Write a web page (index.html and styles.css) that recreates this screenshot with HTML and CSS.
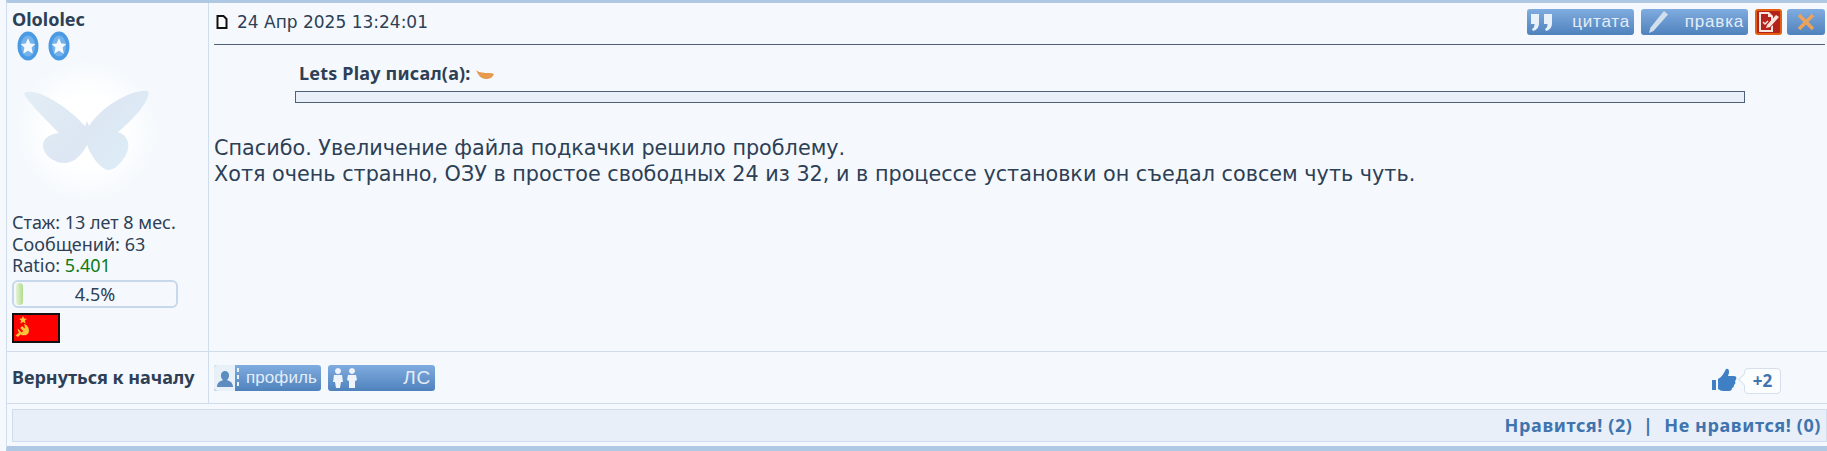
FILE: index.html
```html
<!DOCTYPE html>
<html lang="en">

<head>
    <title>Сообщение</title>
    <link rel="stylesheet" href="styles.css">
</head>

<body>
    <div class="post">
        <!-- left column -->
        <div class="userCell">
            <div class="userName">Olololec</div>
            <div class="stars">
                <svg class="star" viewBox="0 0 22 30"><ellipse cx="11" cy="15" rx="10.500" ry="14.500" fill="#4b9ae4"/><ellipse cx="11" cy="15" rx="7" ry="10.500" fill="#76b2ea"/><path d="M11 7l2.300 5.400 5 .6-3.700 3.600 1.200 6.100-4.800-3-4.800 3 1.200-6.100-3.700-3.600 5-.6z" fill="#f2f8fd"/></svg>
                <svg class="star" viewBox="0 0 22 30"><ellipse cx="11" cy="15" rx="10.500" ry="14.500" fill="#4b9ae4"/><ellipse cx="11" cy="15" rx="7" ry="10.500" fill="#76b2ea"/><path d="M11 7l2.300 5.400 5 .6-3.700 3.600 1.200 6.100-4.800-3-4.800 3 1.200-6.100-3.700-3.600 5-.6z" fill="#f2f8fd"/></svg>
            </div>
            <div class="avatar">
                <svg viewBox="0 0 160 150" width="160" height="150">
                    <defs>
                        <radialGradient id="glow"><stop offset="0.5" stop-color="#ffffff"/><stop offset="1" stop-color="#f5f9fd"/></radialGradient>
                        <linearGradient id="wing" x1="0" y1="0" x2="1" y2="0.6"><stop offset="0" stop-color="#e2edf5"/><stop offset="0.6" stop-color="#dde7f3"/><stop offset="1" stop-color="#dcecf6"/></linearGradient>
                    </defs>
                    <circle cx="80" cy="70" r="70" fill="url(#glow)"/>
                    <path d="M19 31C32 28 60 45 78 65L80 60L82 65C95 45 125 28 141 30C145 38 125 60 111 71C121 74 124 84 119 94C113 104 106 110 100 109C90 105 83 92 80 84C76 92 68 102 58 102C48 102 38 96 36 86C35 78 42 73 52 72C40 60 22 42 17 33C17 32 18 31 19 31Z" fill="url(#wing)"/>
                </svg>
            </div>
            <div class="userInfo">
                <div>Стаж: 13 лет 8 мес.</div>
                <div>Сообщений: 63</div>
                <div>Ratio: <span class="ratio">5.401</span></div>
            </div>
            <div class="progress"><span class="progressFill"></span><span class="progressText">4.5%</span></div>
            <svg class="flag" width="48" height="30" viewBox="0 0 48 30">
                <rect x="1" y="1" width="46" height="28" fill="#ff0000" stroke="#111111" stroke-width="2"/>
                <path d="M11 3l1.200 2.600 2.800.2-2.100 1.800.7 2.800-2.600-1.500-2.600 1.500.7-2.800-2.100-1.800 2.800-.2z" fill="#f9c33a"/>
                <path d="M12 11c4 1 6 5 4.500 9-1.500 2.500-5 3-8 1.500l-2.500 2.500-2.500-1.500 3.500-3c-.8-1-1.300-2.500-1.300-4l4 4 1.500-1.500-3-3 2-2 2.500 2.500c.4-1.800-.2-3.200-.7-4.500z" fill="#f9c33a"/>
            </svg>
        </div>

        <div class="postCell">
            <div class="postHead">
                <svg class="postIcon" width="12" height="14" viewBox="0 0 12 14"><path d="M1.500 1h6l3 3v9h-9z" fill="#fbfbfb" stroke="#111111" stroke-width="2"/></svg>
                <span class="postDate">24 Апр 2025 13:24:01</span>
                <div class="postButtons">
                    <a class="btn btnWide">
                        <svg width="34" height="24" viewBox="0 0 34 24"><path d="M3 4h8v9c0 4-2 7-6 8l-1-2c2-1 2.500-3 2.500-5H3zM16 4h8v9c0 4-2 7-6 8l-1-2c2-1 2.500-3 2.500-5H16z" fill="#e9f1f8"/></svg>
                        <span>цитата</span>
                    </a>
                    <a class="btn btnWide">
                        <svg width="34" height="24" viewBox="0 0 34 24"><path d="M7 23l1.500-5.500L22 1l4 3.500L11.500 21z" fill="#d2e0ee"/></svg>
                        <span>правка</span>
                    </a>
                    <a class="btn btnReport">
                        <svg width="23" height="22" viewBox="0 0 23 22"><path d="M2 1h10l4 4v5h-2V6h-3V3H4v16h10v-3l2-2v7H2z" fill="#fbe6df"/><path d="M6 11l2 2 3-3" fill="none" stroke="#fbe6df" stroke-width="1.400"/><path d="M9 17l1-3L19 4l3 2-9 10z" fill="#fbe6df"/></svg>
                    </a>
                    <a class="btn btnClose">
                        <svg width="20" height="20" viewBox="0 0 20 20"><path d="M3 3l14 14M17 3L3 17" stroke="#eba35c" stroke-width="3.500" fill="none"/></svg>
                    </a>
                </div>
            </div>
            <div class="postBody">
                <div class="quote">
                    <div class="quoteTitle">Lets Play писал(а):
                        <svg width="18" height="11" viewBox="0 0 18 11"><path d="M0 1c3 3 6 2 9 3 2 .5 5-1 9 1-1 3-4 5-8 5C5 10 2 6 0 1z" fill="#e59a50"/></svg>
                    </div>
                    <div class="quoteBox"></div>
                </div>
                <div class="postText">
                    Спасибо. Увеличение файла подкачки решило проблему.<br>
                    Хотя очень странно, ОЗУ в простое свободных 24 из 32, и в процессе установки он съедал совсем чуть чуть.
                </div>
            </div>
        </div>

        <div class="backCell">Вернуться к началу</div>

        <div class="actionCell">
            <a class="btn btnWide btnProfile">
                <svg width="27" height="26" viewBox="0 0 27 26"><path d="M0 3a3 3 0 0 1 3-3h18v26H3a3 3 0 0 1-3-3z" fill="#e9f1f8"/><path d="M3 22c0-5 4-6 6-7-3-2-3-9 2-9s5 7 2 9c2 1 6 2 6 7z" fill="#5d8cc0"/><path d="M24 3v4M24 10v4M24 17v4" stroke="#e9f1f8" stroke-width="2"/></svg>
                <span>профиль</span>
            </a>
            <a class="btn btnWide">
                <svg width="34" height="24" viewBox="0 0 34 24"><path d="M9 2a3 3 0 1 1-.01 0zM5 9h8l1 7h-2l-1 6H7l-1-6H4zM23 2a3 3 0 1 1-.01 0zM19 9h8l1 5-2 1v7h-6v-7l-2-1z" fill="#eef4fa"/></svg>
                <span class="btnPm">ЛС</span>
            </a>
            <div class="rating">
                <svg width="25" height="25" viewBox="0 0 25 25"><path d="M0 12h4v10H0zM6 11c4-2 6-6 8-10 3-1 4 3 2 7h6c3 0 3 3 1 5 1 2 0 3-1 4 0 2-1 3-2 3 0 2-1 3-3 3H11c-2 0-3-1-5-2z" fill="#3f7fc4"/></svg>
                <span class="ratingCount">+2</span>
            </div>
        </div>

        <div class="likesCell">
            <div class="likesBar">Нравится! (2) &nbsp;|&nbsp; Не нравится! (0)</div>
        </div>
    </div>
</body>

</html>
```

FILE: styles.css
```css
body {
    margin: 0;
    background-color: #f5f9fd;
    font-family: "Noto Sans", sans-serif;
    color: #2d4055;
    overflow: hidden;
}

.post {
    display: grid;
    grid-template-columns: 202px 1fr;
    grid-template-rows: 349px 52px 42px;
    height: 443px;
    border-top: 3px solid #afc9e4;
    border-bottom: 5px solid #afc9e4;
    margin-left: 6px;
    border-left: 1px solid #cfdded;
}

.userCell {
    border-right: 1px solid #cfdded;
    border-bottom: 1px solid #cfdded;
    padding: 7px 5px;
    font-size: 18px;
}

.userName {
    font-weight: bold;
    font-size: 18px;
    line-height: 20px;
    margin-top: -1px;
}

.stars {
    display: flex;
    gap: 9px;
    margin: 2px 0 0 5px;
}

.star {
    width: 22px;
    height: 30px;
}

.avatar {
    margin: 0 0 0 -5px;
    height: 151px;
    overflow: hidden;
}

.userInfo {
    line-height: 21.500px;
}

.ratio {
    color: #0c7a16;
}

.progress {
    position: relative;
    box-sizing: border-box;
    width: 166px;
    height: 28px;
    margin-top: 3px;
    border: 2px solid #c6d8ea;
    border-radius: 6px;
    background-color: #f5f9fd;
    text-align: center;
    font-size: 18px;
    line-height: 24px;
}

.progressFill {
    position: absolute;
    left: 2px;
    top: 1px;
    bottom: 1px;
    width: 7px;
    border-radius: 4px;
    background: linear-gradient(to right, #e6f3d8, #b2dc8c);
}

.flag {
    display: block;
    margin-top: 5px;
}

.postCell {
    border-bottom: 1px solid #cfdded;
    min-width: 0;
}

.postHead {
    display: flex;
    align-items: center;
    box-sizing: border-box;
    height: 42px;
    margin: 0 2px 0 5px;
    padding-bottom: 4px;
    border-bottom: 1px solid #4d6278;
    font-family: "DejaVu Sans", sans-serif;
    font-size: 17px;
}

.postIcon {
    margin: 0 9px 0 2px;
}

.postButtons {
    display: flex;
    gap: 7px;
    margin-left: auto;
}

.btn {
    display: flex;
    align-items: center;
    box-sizing: border-box;
    height: 26px;
    border-radius: 3px;
    background: linear-gradient(to bottom, #80ace0, #4f82bc);
    color: #e4edf7;
    font-family: "Liberation Sans", sans-serif;
    font-size: 17px;
    letter-spacing: 0.800px;
}

.btnWide {
    width: 107px;
    justify-content: space-between;
    padding: 0 4px 0 1px;
}

.btnProfile {
    padding: 0 4px 0 0;
    font-size: 17px;
    letter-spacing: 0.100px;
    overflow: hidden;
}

.btnPm {
    font-size: 19px;
}

.btnReport {
    width: 27px;
    justify-content: center;
    background: #b3231b;
    border: 2px solid #e2600f;
}

.btnClose {
    width: 38px;
    justify-content: center;
    margin-left: -2px;
}

.postBody {
    padding: 0 0 0 5px;
}

.quote {
    margin: 18px 0 0 81px;
    width: 1450px;
}

.quoteTitle {
    font-weight: bold;
    font-size: 18px;
    line-height: 20px;
    padding-left: 4px;
    letter-spacing: 0.200px;
}

.quoteBox {
    height: 10px;
    margin-top: 8px;
    background-color: #e8eff8;
    border: 1px solid #4d6278;
}

.postText {
    margin-top: 33px;
    font-family: "DejaVu Sans", sans-serif;
    font-size: 20.750px;
    line-height: 25.600px;
}

.backCell {
    border-right: 1px solid #cfdded;
    border-bottom: 1px solid #cfdded;
    padding-left: 5px;
    font-size: 18px;
    font-weight: bold;
    line-height: 50px;
}

.actionCell {
    display: flex;
    align-items: center;
    gap: 7px;
    padding-left: 5px;
    border-bottom: 1px solid #cfdded;
}

.rating {
    display: flex;
    align-items: center;
    gap: 7px;
    margin-left: auto;
    margin-right: 46px;
    margin-top: 6px;
}

.ratingCount {
    position: relative;
    box-sizing: border-box;
    width: 37px;
    height: 26px;
    border: 1px solid #d5e0ec;
    border-radius: 4px;
    background-color: #fbfdff;
    color: #3f74ae;
    font-size: 17px;
    font-weight: bold;
    line-height: 24px;
    text-align: center;
}

.ratingCount::before {
    content: "";
    position: absolute;
    left: -5px;
    top: 6px;
    width: 8px;
    height: 8px;
    background-color: #fbfdff;
    border-left: 1px solid #d5e0ec;
    border-bottom: 1px solid #d5e0ec;
    transform: rotate(45deg);
}

.likesCell {
    grid-column: 1 / 3;
    padding: 5px 0 4px 5px;
}

.likesBar {
    height: 31px;
    border: 1px solid #cfdded;
    background-color: #e8eff8;
    color: #3f74ae;
    font-size: 18px;
    font-weight: bold;
    letter-spacing: 0.600px;
    line-height: 31px;
    text-align: right;
    padding-right: 5px;
}
```
